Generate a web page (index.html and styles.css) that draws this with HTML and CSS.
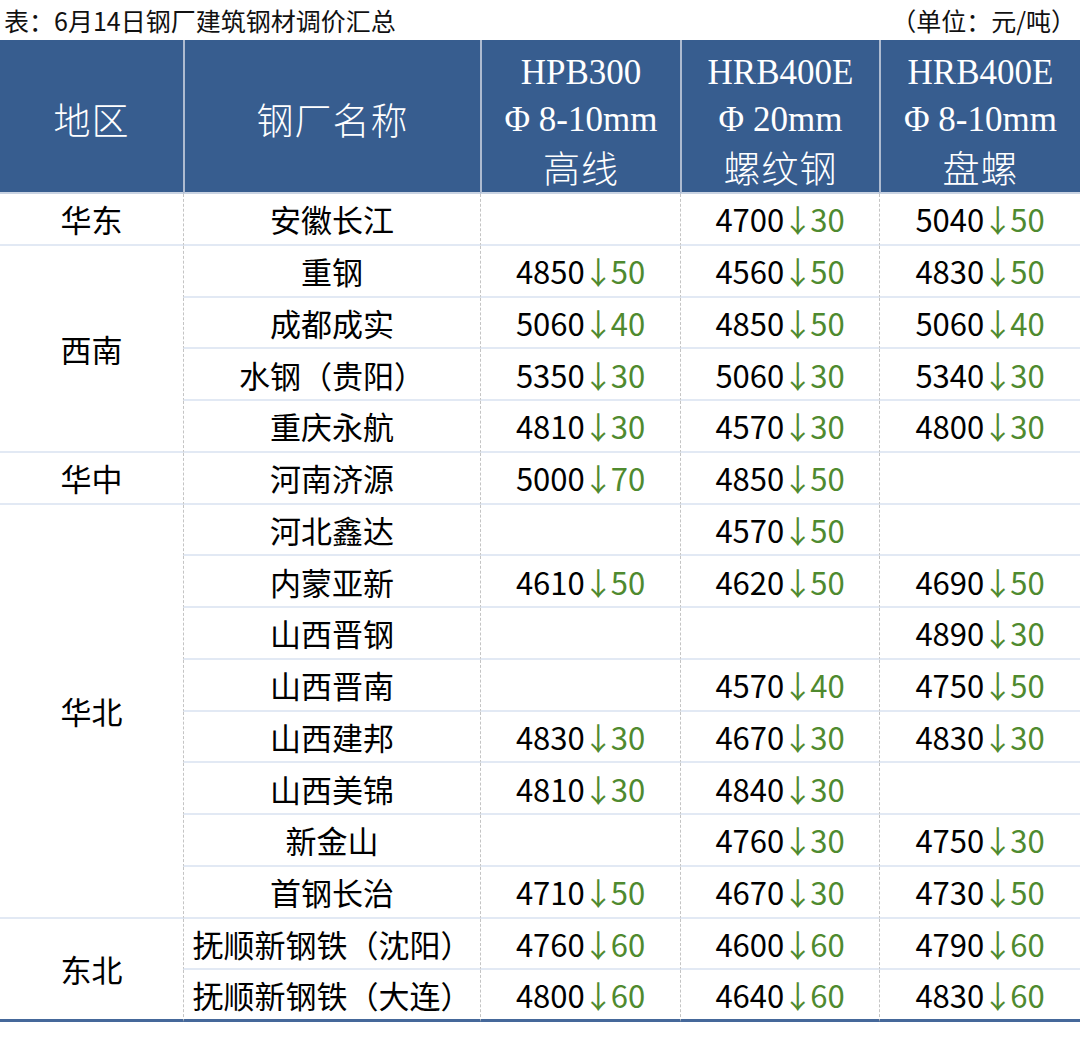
FILE: index.html
```html
<!DOCTYPE html>
<html lang="zh-CN">
<head>
<meta charset="utf-8">
<title>6月14日钢厂建筑钢材调价汇总</title>
<link rel="stylesheet" href="styles.css">
</head>
<body>
<div class="page">
  <div class="caption">
    <span>表：6月14日钢厂建筑钢材调价汇总</span>
    <span>（单位：元/吨）</span>
  </div>
  <div class="grid">
    <div class="hd first"><span class="zh">地区</span></div>
    <div class="hd"><span class="zh">钢厂名称</span></div>
    <div class="hd"><span>HPB300</span><span>Φ 8-10mm</span><span class="zh">高线</span></div>
    <div class="hd"><span>HRB400E</span><span>Φ 20mm</span><span class="zh">螺纹钢</span></div>
    <div class="hd"><span>HRB400E</span><span>Φ 8-10mm</span><span class="zh">盘螺</span></div>

    <div class="region r1">华东</div>
    <div class="c name">安徽长江</div><div class="c"></div><div class="c">4700<em><i>↓</i>30</em></div><div class="c">5040<em><i>↓</i>50</em></div>

    <div class="region r4">西南</div>
    <div class="c name">重钢</div><div class="c">4850<em><i>↓</i>50</em></div><div class="c">4560<em><i>↓</i>50</em></div><div class="c">4830<em><i>↓</i>50</em></div>
    <div class="c name">成都成实</div><div class="c">5060<em><i>↓</i>40</em></div><div class="c">4850<em><i>↓</i>50</em></div><div class="c">5060<em><i>↓</i>40</em></div>
    <div class="c name">水钢（贵阳）</div><div class="c">5350<em><i>↓</i>30</em></div><div class="c">5060<em><i>↓</i>30</em></div><div class="c">5340<em><i>↓</i>30</em></div>
    <div class="c name">重庆永航</div><div class="c">4810<em><i>↓</i>30</em></div><div class="c">4570<em><i>↓</i>30</em></div><div class="c">4800<em><i>↓</i>30</em></div>

    <div class="region r1">华中</div>
    <div class="c name">河南济源</div><div class="c">5000<em><i>↓</i>70</em></div><div class="c">4850<em><i>↓</i>50</em></div><div class="c"></div>

    <div class="region r8">华北</div>
    <div class="c name">河北鑫达</div><div class="c"></div><div class="c">4570<em><i>↓</i>50</em></div><div class="c"></div>
    <div class="c name">内蒙亚新</div><div class="c">4610<em><i>↓</i>50</em></div><div class="c">4620<em><i>↓</i>50</em></div><div class="c">4690<em><i>↓</i>50</em></div>
    <div class="c name">山西晋钢</div><div class="c"></div><div class="c"></div><div class="c">4890<em><i>↓</i>30</em></div>
    <div class="c name">山西晋南</div><div class="c"></div><div class="c">4570<em><i>↓</i>40</em></div><div class="c">4750<em><i>↓</i>50</em></div>
    <div class="c name">山西建邦</div><div class="c">4830<em><i>↓</i>30</em></div><div class="c">4670<em><i>↓</i>30</em></div><div class="c">4830<em><i>↓</i>30</em></div>
    <div class="c name">山西美锦</div><div class="c">4810<em><i>↓</i>30</em></div><div class="c">4840<em><i>↓</i>30</em></div><div class="c"></div>
    <div class="c name">新金山</div><div class="c"></div><div class="c">4760<em><i>↓</i>30</em></div><div class="c">4750<em><i>↓</i>30</em></div>
    <div class="c name">首钢长治</div><div class="c">4710<em><i>↓</i>50</em></div><div class="c">4670<em><i>↓</i>30</em></div><div class="c">4730<em><i>↓</i>50</em></div>

    <div class="region r2 end">东北</div>
    <div class="c name">抚顺新钢铁（沈阳）</div><div class="c">4760<em><i>↓</i>60</em></div><div class="c">4600<em><i>↓</i>60</em></div><div class="c">4790<em><i>↓</i>60</em></div>
    <div class="c name end">抚顺新钢铁（大连）</div><div class="c end">4800<em><i>↓</i>60</em></div><div class="c end">4640<em><i>↓</i>60</em></div><div class="c end">4830<em><i>↓</i>60</em></div>
  </div>
</div>
</body>
</html>
```

FILE: styles.css
```css
* { box-sizing: border-box; }
html, body { margin: 0; padding: 0; background: #ffffff; }
body {
  font-family: "Noto Sans CJK SC", "Noto Sans", sans-serif;
  color: #000;
}
.page { width: 1080px; }
.caption {
  height: 40px;
  display: flex;
  justify-content: space-between;
  align-items: center;
  padding: 0 8px 0 4px;
  font-size: 25px;
  font-weight: 400;
  color: #111;
}
.caption span:last-child { margin-right: -4px; }
.grid {
  display: grid;
  grid-template-columns: 183px 297px 200px 199px 201px;
  grid-template-rows: 154px repeat(16, 51.75px);
}
.hd {
  background: #375d8f;
  color: #fff;
  font-family: "Liberation Serif", "Noto Sans CJK SC", serif;
  font-weight: 300;
  font-size: 35px;
  line-height: 47.5px;
  display: flex;
  flex-direction: column;
  align-items: center;
  justify-content: center;
  border-left: 2px solid #aebbd0;
  border-bottom: 2px solid #c9d3e2;
  padding-top: 8px;
}
.hd.first { border-left: none; }
.hd span { display: block; white-space: nowrap; }
.hd .zh {
  font-family: "Noto Sans CJK SC", serif;
  font-weight: 300;
  font-size: 37px;
  letter-spacing: 1px;
}
.c, .region {
  display: flex;
  align-items: center;
  justify-content: center;
  font-size: 31px;
  border-left: 1px dashed #c4c4c4;
  border-bottom: 2px solid #e2e9f4;
  white-space: nowrap;
}
.region { border-left: none; }
.r1 { grid-row: span 1; }
.r2 { grid-row: span 2; }
.r4 { grid-row: span 4; }
.r8 { grid-row: span 8; }
.c em {
  font-style: normal;
  color: #4f8a2f;
}
.c em i {
  font-style: normal;
  margin: 0 -3px 0 -2px;
}
.end { border-bottom: 3px solid #45689a; }
```
